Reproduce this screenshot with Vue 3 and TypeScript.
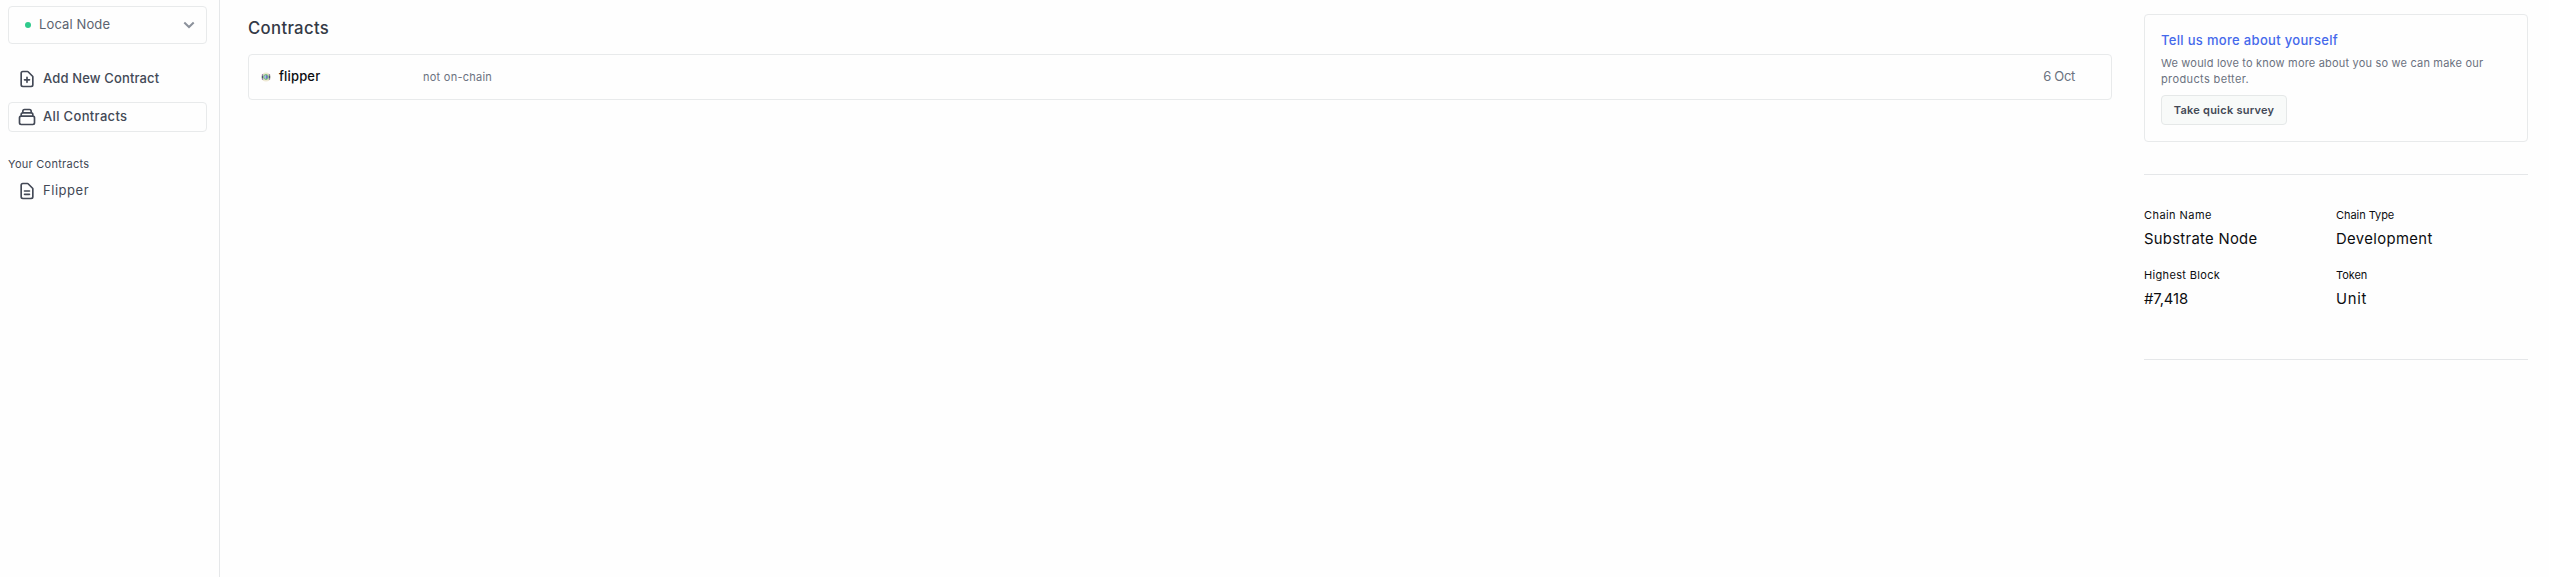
<script setup lang="ts">
interface ChainFact {
  label: string
  value: string
  labelClass: string
  valueClass: string
}

const facts: ChainFact[] = [
  { label: 'Chain Name', value: 'Substrate Node', labelClass: 'chain-name', valueClass: 'node' },
  { label: 'Chain Type', value: 'Development', labelClass: 'chain-type', valueClass: 'dev' },
  { label: 'Highest Block', value: '#7,418', labelClass: 'highest', valueClass: 'block' },
  { label: 'Token', value: 'Unit', labelClass: 'token', valueClass: 'unit' },
]
</script>

<template>
  <div class="layout">
    <aside class="sidebar">
      <button class="network" type="button">
        <span class="dot"></span>
        <span class="network-name">Local Node</span>
        <svg class="chevron" viewBox="0 0 12 8" width="12" height="8"><path d="M1.3 1.5 6 6l4.7-4.5" /></svg>
      </button>
      <nav class="nav">
        <a class="item add">
          <svg class="icon" viewBox="0 0 24 24"><path d="M9 13h6m-3-3v6m5 5H7a2 2 0 0 1-2-2V5a2 2 0 0 1 2-2h5.586a1 1 0 0 1 .707.293l5.414 5.414a1 1 0 0 1 .293.707V19a2 2 0 0 1-2 2z" /></svg>
          <span class="item-label">Add New Contract</span>
        </a>
        <a class="item active all">
          <svg class="icon" viewBox="0 0 24 24"><path d="M19 11H5m14 0a2 2 0 0 1 2 2v6a2 2 0 0 1-2 2H5a2 2 0 0 1-2-2v-6a2 2 0 0 1 2-2m14 0V9a2 2 0 0 0-2-2M5 11V9a2 2 0 0 1 2-2m0 0V5a2 2 0 0 1 2-2h6a2 2 0 0 1 2 2v2M7 7h10" /></svg>
          <span class="item-label">All Contracts</span>
        </a>
      </nav>
      <div class="group">Your Contracts</div>
      <a class="item own">
        <svg class="icon" viewBox="0 0 24 24"><path d="M9 12h6m-6 4h6m2 5H7a2 2 0 0 1-2-2V5a2 2 0 0 1 2-2h5.586a1 1 0 0 1 .707.293l5.414 5.414a1 1 0 0 1 .293.707V19a2 2 0 0 1-2 2z" /></svg>
        <span class="item-label">Flipper</span>
      </a>
    </aside>

    <main class="main">
      <h1 class="title">Contracts</h1>
      <div class="row">
        <svg class="identicon" viewBox="0 0 10 10" width="10" height="10">
          <circle cx="5" cy="5" r="4.6" fill="#eee9d3" />
          <path d="M1.6 2.2v1.6M8.4 2.2v1.6M1.6 6.2v1.6M8.4 6.2v1.6" stroke="#8d6fa6" stroke-width="1.4" />
          <path d="M1.4 3.8v2.4M8.6 3.8v2.4" stroke="#4d5573" stroke-width="1.2" />
          <circle cx="5" cy="5" r="2.4" fill="#a5b5e8" stroke="#6fc16a" />
          <path d="M5.2 3.6a1.5 1.5 0 0 1 0 2.8" fill="none" stroke="#4653a0" />
        </svg>
        <span class="name">flipper</span>
        <span class="status">not on-chain</span>
        <span class="date">6 Oct</span>
      </div>
    </main>

    <aside class="info">
      <section class="survey">
        <h2 class="survey-title">Tell us more about yourself</h2>
        <p class="survey-text">
          <span class="line">We would love to know more about you so we can make our</span>
          <span class="line last">products better.</span>
        </p>
        <button class="survey-button" type="button">Take quick survey</button>
      </section>
      <dl class="facts">
        <div v-for="fact in facts" :key="fact.label" class="fact">
          <dt :class="fact.labelClass">{{ fact.label }}</dt>
          <dd :class="fact.valueClass">{{ fact.value }}</dd>
        </div>
      </dl>
    </aside>
  </div>
</template>

<style>
body {
  background: #fefefe;
}
</style>

<style scoped>
.layout {
  display: flex;
  height: 577px;
  overflow: hidden;
  font-family: Inter, "Liberation Sans", sans-serif;
  font-size: 13px;
  color: #434956;
  white-space: nowrap;
}
button {
  font: inherit;
  color: inherit;
  background: none;
  margin: 0;
}
.sidebar {
  width: 220px;
  box-sizing: border-box;
  padding: 6px 12px 0 8px;
  border-right: 1px solid #e5e7e9;
  flex: none;
}
.network {
  display: flex;
  align-items: center;
  width: 199px;
  height: 38px;
  box-sizing: border-box;
  padding: 0 11px 0 16px;
  border: 1px solid #e8eaeb;
  border-radius: 4px;
  color: #5c6370;
}
.dot {
  width: 6px;
  height: 6px;
  border-radius: 50%;
  background: #2fca8c;
}
.network-name {
  margin: -2px 0 0 8px;
  line-height: 16px;
  letter-spacing: 0.12px;
}
.chevron {
  margin-left: auto;
  fill: none;
  stroke: #8b919b;
  stroke-width: 2;
}
.nav {
  display: flex;
  flex-direction: column;
  gap: 8px;
  margin-top: 20px;
}
.item {
  display: flex;
  align-items: center;
  gap: 6px;
  width: 199px;
  height: 30px;
  box-sizing: border-box;
  padding-left: 8px;
  border: 1px solid transparent;
  border-radius: 4px;
}
.item-label {
  margin-top: -2px;
  line-height: 16px;
}
.active {
  border-color: #e8eaeb;
}
.icon {
  width: 20px;
  height: 20px;
  fill: none;
  stroke: #434956;
  stroke-width: 2;
  stroke-linecap: round;
  stroke-linejoin: round;
}
.add {
  font-weight: 450;
  letter-spacing: 0.14px;
}
.all {
  font-weight: 450;
  letter-spacing: 0.34px;
}
.own {
  letter-spacing: 0.53px;
}
.group {
  margin: 24px 0 4px;
  line-height: 16px;
  font-size: 11px;
  letter-spacing: 0.27px;
}
.main {
  flex: 1;
  padding: 16px 32px 0 28px;
}
.title {
  margin: 0 0 14px;
  line-height: 24px;
  font-size: 16.7px;
  font-weight: 550;
  letter-spacing: 0.34px;
  color: #343a46;
}
.row {
  display: flex;
  align-items: center;
  height: 46px;
  box-sizing: border-box;
  padding: 0 36px 0 12px;
  border: 1px solid #e8eaeb;
  border-radius: 4px;
}
.name {
  width: 144px;
  margin: -2px 0 0 8px;
  font-weight: 450;
  letter-spacing: 0.16px;
  color: #0c0d10;
}
.status {
  font-size: 11px;
  letter-spacing: 0.25px;
  color: #6b7280;
}
.date {
  margin: -2px 0 0 auto;
  letter-spacing: -0.3px;
  color: #6b7280;
}
.info {
  width: 384px;
  padding: 14px 21px 0 0;
  flex: none;
}
.survey {
  height: 128px;
  box-sizing: border-box;
  padding: 15px 16px 16px;
  border: 1px solid #e8eaeb;
  border-radius: 4px;
}
.survey-title {
  margin: 0 0 5px;
  font-size: 13px;
  line-height: 20px;
  font-weight: 550;
  letter-spacing: 0.32px;
  color: #4569eb;
}
.survey-text {
  margin: 0 0 8px;
  font-size: 11px;
  line-height: 16px;
  letter-spacing: 0.19px;
  color: #6b7280;
}
.line {
  display: block;
}
.last {
  letter-spacing: 0.37px;
}
.survey-button {
  display: block;
  width: 126px;
  height: 30px;
  padding: 0;
  border: 1px solid #e5e8e8;
  border-radius: 4px;
  background: #f8faf9;
  font-size: 11px;
  font-weight: 600;
  letter-spacing: 0.25px;
}
.facts {
  display: grid;
  grid-template-columns: 1fr 1fr;
  align-content: start;
  row-gap: 16px;
  height: 152px;
  margin: 32px 0 0;
  padding-top: 32px;
  border-top: 1px solid #e5e7e9;
  border-bottom: 1px solid #e5e7e9;
  color: #0c0d10;
}
.fact {
  height: 44px;
}
dt {
  font-size: 11px;
  line-height: 16px;
}
dd {
  margin: 4px 0 0;
  font-size: 14.8px;
  line-height: 24px;
}
.chain-name { letter-spacing: 0.43px; }
.chain-type { letter-spacing: -0.05px; }
.highest { letter-spacing: 0.34px; }
.token { letter-spacing: -0.06px; }
.node { letter-spacing: 0.31px; }
.dev { letter-spacing: 0.4px; }
.block { letter-spacing: -0.1px; }
.unit { letter-spacing: 0.73px; }
</style>
